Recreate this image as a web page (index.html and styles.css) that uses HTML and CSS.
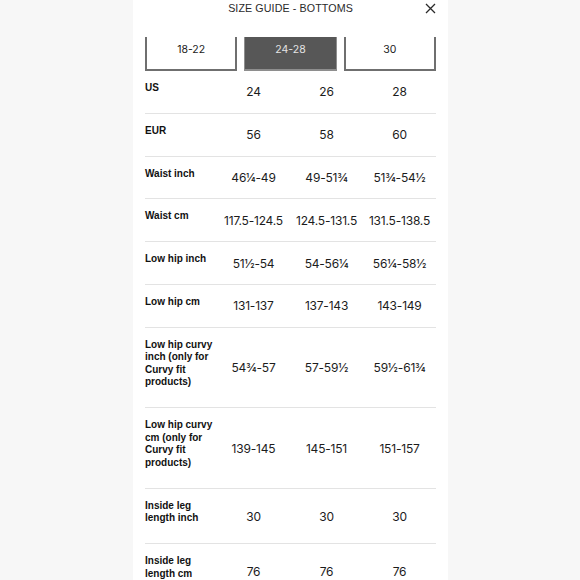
FILE: index.html
```html
<!DOCTYPE html>
<html lang="en">
<head>
<meta charset="utf-8">
<title>Size guide - bottoms</title>
<link rel="stylesheet" href="styles.css">
</head>
<body>
<div class="panel">
  <header class="head">
    <span></span>
    <h1 class="title">SIZE GUIDE - BOTTOMS</h1>
    <button class="close" aria-label="Close">
      <svg width="11" height="11" viewBox="0 0 11 11"><path d="M1 1L10 10M10 1L1 10" stroke="#2a2a2a" stroke-width="1.3" fill="none"/></svg>
    </button>
  </header>
  <div class="tabs">
    <div class="tab">18-22</div>
    <div class="tab active">24-28</div>
    <div class="tab">30</div>
  </div>
  <div class="table">
    <div class="row"><div class="label">US</div><div class="val">24</div><div class="val">26</div><div class="val">28</div></div>
    <div class="row"><div class="label">EUR</div><div class="val">56</div><div class="val">58</div><div class="val">60</div></div>
    <div class="row"><div class="label">Waist inch</div><div class="val">46¼-49</div><div class="val">49-51¾</div><div class="val">51¾-54½</div></div>
    <div class="row"><div class="label">Waist cm</div><div class="val">117.5-124.5</div><div class="val">124.5-131.5</div><div class="val">131.5-138.5</div></div>
    <div class="row"><div class="label">Low hip inch</div><div class="val">51½-54</div><div class="val">54-56¼</div><div class="val">56¼-58½</div></div>
    <div class="row"><div class="label">Low hip cm</div><div class="val">131-137</div><div class="val">137-143</div><div class="val">143-149</div></div>
    <div class="row"><div class="label">Low hip curvy inch (only for Curvy fit products)</div><div class="val">54¾-57</div><div class="val">57-59½</div><div class="val">59½-61¾</div></div>
    <div class="row"><div class="label">Low hip curvy cm (only for Curvy fit products)</div><div class="val">139-145</div><div class="val">145-151</div><div class="val">151-157</div></div>
    <div class="row"><div class="label">Inside leg length inch</div><div class="val">30</div><div class="val">30</div><div class="val">30</div></div>
    <div class="row"><div class="label">Inside leg length cm</div><div class="val">76</div><div class="val">76</div><div class="val">76</div></div>
  </div>
</div>
</body>
</html>
```
FILE: styles.css
```css
* { box-sizing: border-box; }
html, body {
  margin: 0;
  height: 580px;
  overflow: hidden;
}
body {
  background: #f7f7f7;
  font-family: "Liberation Sans", Arial, sans-serif;
  color: #1c1c1c;
  display: flex;
  justify-content: center;
}
.panel {
  width: 315px;
  margin-left: 1px;
  background: #ffffff;
  padding: 0 12px;
  height: 580px;
}
.head {
  height: 37px;
  display: grid;
  grid-template-columns: 1fr auto 1fr;
  align-items: start;
}
.title {
  margin: 0;
  font-size: 10.7px;
  font-weight: normal;
  line-height: 16px;
  color: #2a2a2a;
  letter-spacing: 0.1px;
}
.close {
  justify-self: end;
  border: 0;
  background: none;
  padding: 0;
  margin-top: 3px;
  width: 11px;
  height: 11px;
  display: flex;
}
.tabs {
  display: grid;
  grid-template-columns: 1fr 1fr 1fr;
  gap: 7px;
}
.tab {
  height: 34px;
  border: 2px solid #6f6f6f;
  border-top: 0;
  text-align: center;
  font-family: Inter, "Liberation Sans", sans-serif;
  font-size: 10.5px;
  line-height: 14px;
  padding-top: 6px;
  color: #222;
}
.tab.active {
  background: #575757;
  border-color: #8e8e8e;
  border-width: 1px;
  border-bottom-width: 2px;
  color: #e4e4e4;
}
.row {
  display: grid;
  grid-template-columns: 72px 1fr 1fr 1fr;
  align-items: center;
  border-bottom: 1px solid #e3e3e3;
}
.label {
  font-weight: bold;
  font-size: 10px;
  line-height: 12.6px;
  padding: 11px 0 18.2px;
  color: #111;
}
.val {
  text-align: center;
  font-family: Inter, "Liberation Sans", sans-serif;
  font-size: 12px;
  letter-spacing: -0.2px;
  color: #1c1c1c;
  white-space: nowrap;
}
```
